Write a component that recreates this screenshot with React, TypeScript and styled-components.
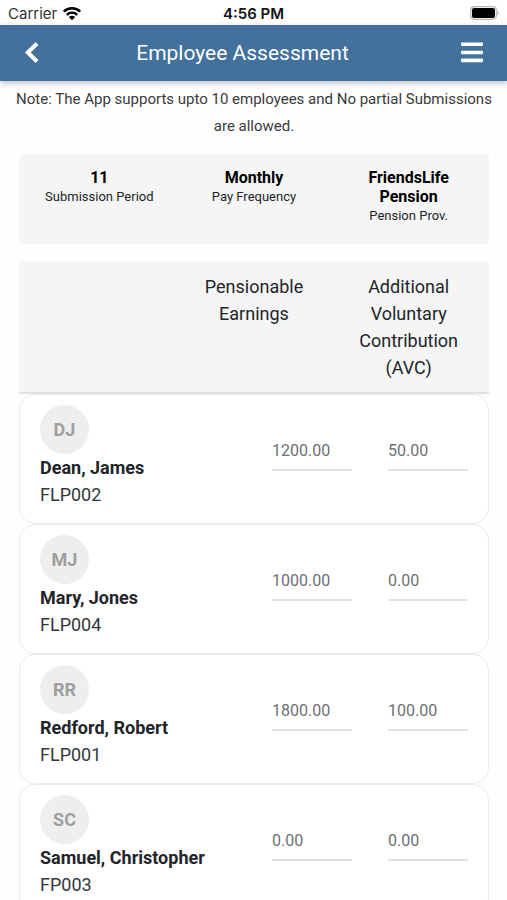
import React, { useState } from "react";
import styled, { createGlobalStyle } from "styled-components";

const GlobalStyle = createGlobalStyle`
  *, *::before, *::after { box-sizing: border-box; }
  body {
    margin: 0;
    background: #fefefe;
    color: #212529;
    font-family: Roboto, "Noto Sans", sans-serif;
  }
`;

const Screen = styled.div`
  height: 100vh;
  display: flex;
  flex-direction: column;
  overflow: hidden;
`;

const StatusBar = styled.div`
  flex: none;
  height: 25px;
  padding: 2px 8px 0;
  display: grid;
  grid-template-columns: 1fr auto 1fr;
  align-items: center;
  background: #ffffff;
  color: #111111;
  font: 400 15px/20px Inter, sans-serif;
`;

const Carrier = styled.span`
  display: flex;
  align-items: center;
  gap: 5px;
  color: #333333;
`;

const Clock = styled.span`
  font-weight: 600;
`;

const BatteryIcon = styled.svg`
  justify-self: end;
`;

const AppBar = styled.header`
  flex: none;
  z-index: 1;
  height: 56px;
  padding: 0 20px;
  display: grid;
  grid-template-columns: 28px 1fr 28px;
  align-items: center;
  background: #41719c;
  color: #ffffff;
  box-shadow: 0 2px 6px rgba(0, 0, 0, 0.26);
`;

const Title = styled.h1`
  margin: 0;
  padding-right: 22px;
  text-align: center;
  font-size: 21px;
  font-weight: 400;
  line-height: 28px;
`;

const IconButton = styled.button`
  width: 28px;
  height: 28px;
  padding: 0;
  display: grid;
  place-items: center;
  border: 0;
  background: none;
  color: inherit;
  cursor: pointer;
`;

const Content = styled.main`
  flex: 1;
  min-height: 0;
  padding: 5px 18px 0 19px;
  overflow: hidden;
`;

const Note = styled.p`
  margin: 0 -8px 14px;
  text-align: center;
  font-size: 15px;
  line-height: 27px;
  color: #3a3a3a;
`;

const Summary = styled.dl`
  margin: 0 0 17px;
  min-height: 90px;
  padding: 14px 3px 18px;
  display: grid;
  grid-template-columns: repeat(3, minmax(0, 1fr));
  border-radius: 4px;
  background: #f5f5f5;
  text-align: center;
`;

const SummaryItem = styled.div`
  padding: 0 20px;
  display: flex;
  flex-direction: column-reverse;
  justify-content: flex-end;
`;

const SummaryLabel = styled.dt`
  font-size: 13px;
  line-height: 19px;
`;

const SummaryValue = styled.dd`
  margin: 0;
  font-size: 16px;
  font-weight: 700;
  line-height: 19px;
  color: #000000;
`;

const Table = styled.table`
  width: 100%;
  display: block;
`;

const TableHead = styled.thead`
  display: block;
`;

const TableBody = styled.tbody`
  display: block;
`;

const HeadRow = styled.tr`
  padding: 12px 3px 11px;
  display: grid;
  grid-template-columns: repeat(3, minmax(0, 1fr));
  border-bottom: 2px solid #e0e0e0;
  background: #f5f5f5;
`;

const HeadCell = styled.th`
  padding: 0 20px;
  font-size: 18px;
  font-weight: 400;
  line-height: 27px;
`;

const EmployeeRow = styled.tr`
  padding: 10px 20px 15px;
  display: grid;
  grid-template-columns: minmax(0, 1fr) 80px 80px;
  column-gap: 36px;
  border: 1px solid #ebebeb;
  border-radius: 16px;
  background: #ffffff;
`;

const EmployeeCell = styled.th`
  padding: 0;
  text-align: left;
  font-size: 18px;
  font-weight: 400;
  line-height: 27px;
`;

const Avatar = styled.div`
  width: 49px;
  height: 49px;
  display: grid;
  place-items: center;
  border-radius: 50%;
  background: #eeeeee;
  color: #9e9e9e;
  font-weight: 700;
`;

const EmployeeName = styled.div`
  font-weight: 700;
`;

const EmployeeCode = styled.div`
  color: #33373b;
`;

const AmountCell = styled.td`
  padding: 26px 0 0;
`;

const AmountInput = styled.input`
  width: 100%;
  height: 40px;
  padding: 0;
  border: 0;
  border-bottom: 2px solid #dee2e6;
  border-radius: 0;
  outline: 0;
  background: transparent;
  color: #6c6f73;
  font: 400 16px/38px Roboto, sans-serif;

  &:focus {
    border-bottom-color: #41719c;
  }
`;

const summary = [
  { label: "Submission Period", value: "11" },
  { label: "Pay Frequency", value: "Monthly" },
  { label: "Pension Prov.", value: "FriendsLife Pension" },
];

interface Employee {
  initials: string;
  name: string;
  code: string;
  earnings: string;
  avc: string;
}

const initialEmployees: Employee[] = [
  { initials: "DJ", name: "Dean, James", code: "FLP002", earnings: "1200.00", avc: "50.00" },
  { initials: "MJ", name: "Mary, Jones", code: "FLP004", earnings: "1000.00", avc: "0.00" },
  { initials: "RR", name: "Redford, Robert", code: "FLP001", earnings: "1800.00", avc: "100.00" },
  { initials: "SC", name: "Samuel, Christopher", code: "FP003", earnings: "0.00", avc: "0.00" },
];

export default function App() {
  const [employees, setEmployees] = useState(initialEmployees);

  const update = (code: string, field: "earnings" | "avc", value: string) =>
    setEmployees((list) => list.map((e) => (e.code === code ? { ...e, [field]: value } : e)));

  return (
    <>
      <GlobalStyle />
      <Screen>
        <StatusBar>
          <Carrier>
            Carrier
            <svg width="20" height="15" viewBox="0 0 20 15" fill="none" stroke="#000" aria-hidden="true">
              <path d="M1.8 5.6a11.7 11.7 0 0 1 16.4 0" strokeWidth="2.5" />
              <path d="M4.8 8.8a7.4 7.4 0 0 1 10.4 0" strokeWidth="2.4" />
              <path d="M10 14.2 6.9 11.1a4.5 4.5 0 0 1 6.2 0Z" fill="#000" stroke="none" />
            </svg>
          </Carrier>
          <Clock>4:56 PM</Clock>
          <BatteryIcon width="29" height="15" viewBox="0 0 29 15" aria-hidden="true">
            <rect x="0.7" y="0.7" width="25.600" height="12.600" rx="3.500" fill="#fff" stroke="#b5b5b5" strokeWidth="1.200" />
            <rect x="2" y="2" width="23" height="10" rx="2" fill="#000" />
            <path d="M27.500 4.800c1.600.6 1.600 3.800 0 4.400Z" fill="#a5a5a5" />
          </BatteryIcon>
        </StatusBar>

        <AppBar>
          <IconButton type="button" aria-label="Back">
            <svg width="28" height="28" viewBox="0 0 28 28" fill="none" stroke="currentColor" strokeWidth="4" aria-hidden="true">
              <path d="M17 4.500 7.800 13.500 17 22.500" strokeLinejoin="miter" />
            </svg>
          </IconButton>
          <Title>Employee Assessment</Title>
          <IconButton type="button" aria-label="Menu">
            <svg width="28" height="28" viewBox="0 0 28 28" fill="currentColor" aria-hidden="true">
              <rect x="2" y="3.500" width="22" height="3.600" rx="1" />
              <rect x="2" y="11.700" width="22" height="3.600" rx="1" />
              <rect x="2" y="19.600" width="22" height="3.600" rx="1" />
            </svg>
          </IconButton>
        </AppBar>

        <Content>
          <Note>Note: The App supports upto 10 employees and No partial Submissions are allowed.</Note>

          <Summary>
            {summary.map((item) => (
              <SummaryItem key={item.label}>
                <SummaryLabel>{item.label}</SummaryLabel>
                <SummaryValue>{item.value}</SummaryValue>
              </SummaryItem>
            ))}
          </Summary>

          <Table>
            <TableHead>
              <HeadRow>
                <HeadCell scope="col" aria-label="Employee" />
                <HeadCell scope="col">Pensionable Earnings</HeadCell>
                <HeadCell scope="col">Additional Voluntary Contribution (AVC)</HeadCell>
              </HeadRow>
            </TableHead>
            <TableBody>
              {employees.map((e) => (
                <EmployeeRow key={e.code}>
                  <EmployeeCell scope="row">
                    <Avatar aria-hidden="true">{e.initials}</Avatar>
                    <EmployeeName>{e.name}</EmployeeName>
                    <EmployeeCode>{e.code}</EmployeeCode>
                  </EmployeeCell>
                  <AmountCell>
                    <AmountInput
                      inputMode="decimal"
                      aria-label={`Pensionable earnings for ${e.name}`}
                      value={e.earnings}
                      onChange={(ev) => update(e.code, "earnings", ev.target.value)}
                    />
                  </AmountCell>
                  <AmountCell>
                    <AmountInput
                      inputMode="decimal"
                      aria-label={`Additional voluntary contribution for ${e.name}`}
                      value={e.avc}
                      onChange={(ev) => update(e.code, "avc", ev.target.value)}
                    />
                  </AmountCell>
                </EmployeeRow>
              ))}
            </TableBody>
          </Table>
        </Content>
      </Screen>
    </>
  );
}
